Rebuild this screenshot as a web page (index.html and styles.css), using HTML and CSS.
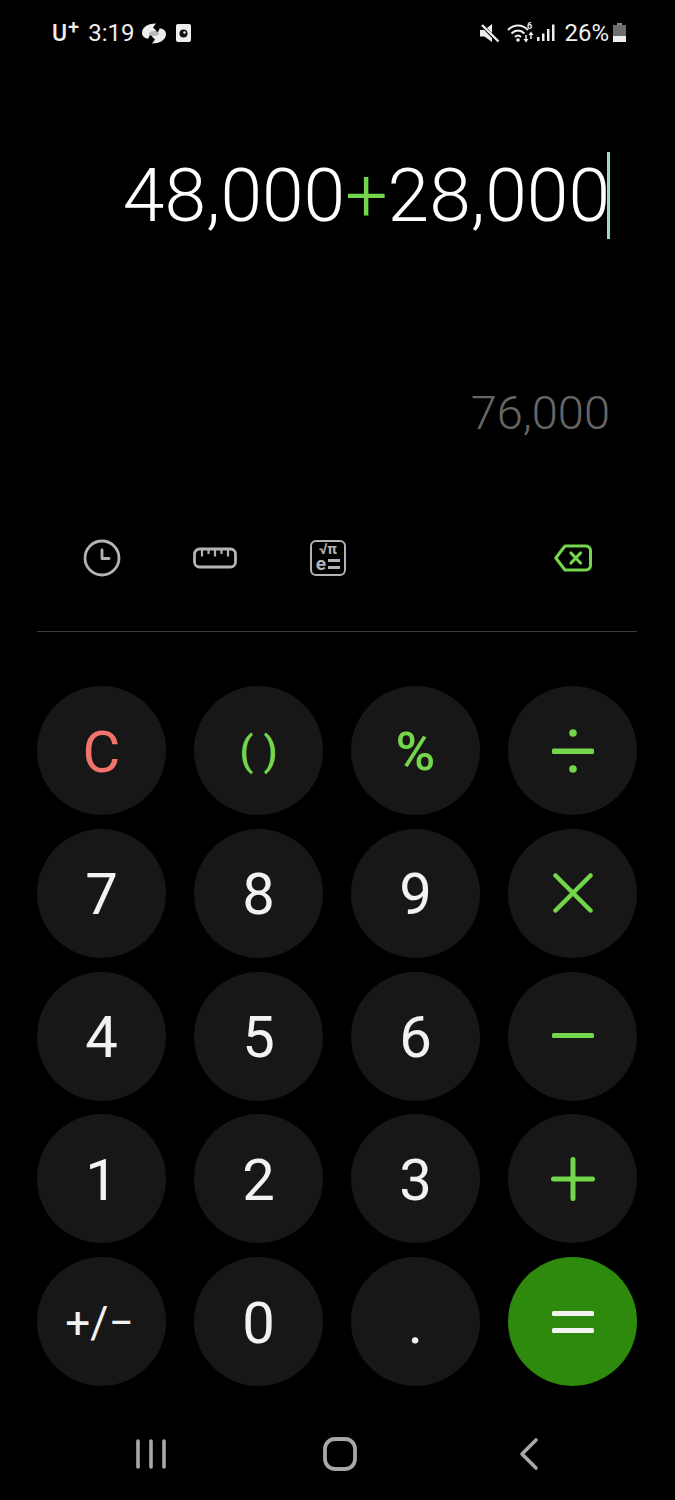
FILE: index.html
```html
<!DOCTYPE html>
<html lang="en">
<head>
<meta charset="utf-8">
<title>Calculator</title>
<link rel="stylesheet" href="styles.css">
</head>
<body>
<div class="phone">
  <header class="status">
    <div class="status-group">
      <span class="carrier">U<sup>+</sup></span>
      <span class="time">3:19</span>
      <svg class="ic-chat" width="24" height="21" viewBox="0 0 24 21" fill="#eee"><path d="M14 .5C7 .5 0 3.500 0 10c0 3.500 3 5.500 6.500 5.500C7.500 11.500 10 8.500 14.500 8L11 4.500z"/><path d="M10 20.500C17 20.500 24 17.500 24 11c0-3.500-3-5.500-6.500-5.500C16.500 9.500 14 12.500 9.500 13L13 16.500z"/><ellipse cx="12" cy="10.500" rx="5" ry="2.500" fill="#bbb"/></svg>
      <svg class="ic-cam" width="15" height="18" viewBox="0 0 15 18"><rect x="0" y="0" width="15" height="18" rx="2" fill="#eee"/><circle cx="7.500" cy="9.500" r="4" fill="#111"/><circle cx="8.500" cy="8.500" r="1.200" fill="#eee"/></svg>
    </div>
    <div class="status-group right">
      <svg class="ic-mute" width="20" height="19" viewBox="0 0 20 19"><path fill="#eee" d="M0 6h4.500L12 0v18L4.500 12.500H0z"/><path d="M1 0l17 18" stroke="#000" stroke-width="3.500"/><path d="M2 1l16.500 16.500" stroke="#eee" stroke-width="2.400"/></svg>
      <svg class="ic-wifi" width="27" height="22" viewBox="0 0 27 22"><g fill="none" stroke="#eee" stroke-width="2"><path d="M1 8c6-6 14-6 20 0"/><path d="M4.500 11.500c4-4 9-4 13 0"/><path d="M8 15c2-2 4-2 6 0"/></g><circle cx="11" cy="18" r="1.800" fill="#eee"/><text class="wifi-six" x="20" y="7">6</text><path stroke="#eee" stroke-width="1.500" d="M19 13v5M24 12v5"/><path fill="#eee" d="M16.500 17h5L19 20.500zM21.500 13h5L24 9.500z"/></svg>
      <svg class="ic-signal" width="18" height="20" viewBox="0 0 18 20"><g fill="#eee"><rect x="0" y="14" width="2.500" height="4"/><rect x="5" y="10.500" width="2.500" height="7.500"/><rect x="10" y="6" width="2.500" height="12"/><rect x="15" y="1.500" width="2.500" height="16.500"/></g></svg>
      <span class="pct">26%</span>
      <svg class="ic-batt" width="13" height="20" viewBox="0 0 13 20"><rect x="4" y="0" width="5" height="2" fill="#888"/><rect x="0" y="2" width="13" height="11" fill="#6e6e6e"/><rect x="0" y="13" width="13" height="6" fill="#eee"/></svg>
    </div>
  </header>

  <section class="display">
    <div class="expression">48,000<span class="op">+</span>28,000<span class="caret"></span></div>
    <div class="preview">76,000</div>
  </section>

  <section class="tools">
    <div class="tools-left">
      <svg class="tool tool-clock" width="38" height="38" viewBox="0 0 38 38" fill="none" stroke="#b3b3b3" stroke-width="2.800"><circle cx="19" cy="19" r="17"/><path d="M19 11V19.500H26" stroke-linecap="round" stroke-linejoin="round"/></svg>
      <svg class="tool tool-ruler" width="44" height="22" viewBox="0 0 44 22" fill="none" stroke="#b3b3b3" stroke-width="2.800"><rect x="1.500" y="2" width="41" height="18" rx="5"/><path d="M9 3v6.500M15.500 3v4M22 3v6.500M28.500 3v4M35 3v6.500" stroke-width="2.200"/></svg>
      <div class="tool tool-sci"><span class="sci-top">√π</span><span class="sci-bottom">e<span class="sci-eq"></span></span></div>
    </div>
    <svg class="tool tool-back" width="38" height="28" viewBox="0 0 38 28" fill="none" stroke="#74d64a" stroke-width="3" stroke-linejoin="round" stroke-linecap="round"><path d="M11 2H32a4.500 4.500 0 0 1 4.500 4.500v15A4.500 4.500 0 0 1 32 26H11L1.800 14z"/><path d="M17 9l9.500 10M26.500 9L17 19" stroke-width="3.200"/></svg>
  </section>

  <hr class="divider">

  <section class="keypad">
    <button class="key clear">C</button>
    <button class="key accent paren">( )</button>
    <button class="key accent pct-key">%</button>
    <button class="key accent sym">
      <svg width="42" height="44" viewBox="0 0 42 44" fill="#74d64a"><rect x="0" y="19.500" width="42" height="5.500" rx="1.500"/><circle cx="21" cy="4" r="3.800"/><circle cx="21" cy="40" r="3.800"/></svg>
    </button>
    <button class="key">7</button>
    <button class="key">8</button>
    <button class="key">9</button>
    <button class="key accent sym">
      <svg width="40" height="40" viewBox="0 0 40 40" stroke="#74d64a" stroke-width="4.500" stroke-linecap="round"><path d="M2.500 2.500l35 35M37.500 2.500l-35 35"/></svg>
    </button>
    <button class="key">4</button>
    <button class="key">5</button>
    <button class="key">6</button>
    <button class="key accent sym">
      <svg width="42" height="6" viewBox="0 0 42 6" fill="#74d64a"><rect x="0" y="0" width="42" height="5" rx="1.500"/></svg>
    </button>
    <button class="key">1</button>
    <button class="key">2</button>
    <button class="key">3</button>
    <button class="key accent sym">
      <svg width="44" height="44" viewBox="0 0 44 44" stroke="#74d64a" stroke-width="5" stroke-linecap="round"><path d="M2.500 22h39M22 2.500v39"/></svg>
    </button>
    <button class="key small">+/−</button>
    <button class="key">0</button>
    <button class="key">.</button>
    <button class="key equals">
      <svg width="42" height="24" viewBox="0 0 42 24" fill="#f2f2f2"><rect x="0" y="1" width="42" height="5" rx="1.500"/><rect x="0" y="18" width="42" height="5" rx="1.500"/></svg>
    </button>
  </section>

  <nav class="navbar">
    <svg width="32" height="32" viewBox="0 0 32 32" stroke="#a8a8a8" stroke-width="3.600" stroke-linecap="round"><path d="M3 3v26M16 3v26M29 3v26"/></svg>
    <svg class="nav-home" width="34" height="34" viewBox="0 0 34 34" fill="none" stroke="#a8a8a8" stroke-width="3.800"><rect x="2" y="2" width="30" height="30" rx="10"/></svg>
    <svg class="nav-back" width="22" height="34" viewBox="0 0 22 34" fill="none" stroke="#a8a8a8" stroke-width="3.600" stroke-linecap="round" stroke-linejoin="round"><path d="M18 3L4 17l14 14"/></svg>
  </nav>
</div>
</body>
</html>
```
FILE: styles.css
```css
* { box-sizing: border-box; }
html, body { margin: 0; padding: 0; background: #000; }
body { font-family: Roboto, "Liberation Sans", sans-serif; color: #f2f2f2; }
.phone { width: 675px; height: 1500px; overflow: hidden; display: flex; flex-direction: column; background: #000; }

.status { height: 66px; padding: 0 49px 0 52px; display: flex; justify-content: space-between; align-items: center; font-size: 24px; color: #eee; }
.status-group { display: flex; align-items: center; gap: 8px; }
.status-group.right { gap: 4px; }
.carrier { font-weight: 500; font-size: 23px; line-height: 1; letter-spacing: 1px; }
.carrier sup { font-size: 20px; line-height: 0; vertical-align: 7px; }
.time { font-size: 24px; }
.ic-chat { margin-right: 2px; }
.ic-mute { margin-right: 3px; }
.ic-wifi { margin-right: -1px; }
.wifi-six { font-size: 9px; font-weight: 700; fill: #eee; }
.pct { margin-left: 5px; font-size: 24px; }

.display { height: 464px; padding: 74px 65px 0 0; display: flex; flex-direction: column; align-items: flex-end; }
.expression { font-size: 75px; font-weight: 300; line-height: 110px; color: #fff; white-space: nowrap; position: relative; }
.op { color: #74d64a; }
.caret { position: absolute; right: 0; top: 12px; width: 3px; height: 87px; background: #9ed8d0; }
.preview { margin-top: 133px; font-size: 47px; font-weight: 300; line-height: 60px; color: #666; }

.tools { height: 71px; margin-top: -8px; padding: 0 83px 0 83px; display: flex; justify-content: space-between; align-items: center; }
.tools-left { display: flex; align-items: center; gap: 72px; }
.tool { display: block; }
.tool-sci { width: 36px; height: 36px; margin-left: 1px; padding-top: 1px; border: 2.800px solid #b3b3b3; border-radius: 6px; display: flex; flex-direction: column; align-items: center; font-weight: 700; color: #b3b3b3; }
.sci-top { font-size: 15px; line-height: 13px; height: 13px; }
.sci-bottom { font-size: 19px; line-height: 16px; height: 16px; display: flex; align-items: center; gap: 2px; }
.sci-eq { display: block; width: 12px; height: 10px; border-top: 3px solid #b3b3b3; border-bottom: 3px solid #b3b3b3; }

.divider { height: 1px; margin: 38px 38px 0 37px; border: 0; background: #3a3a3a; }

.keypad { margin: 54px 38px 0 37px; display: grid; grid-template-columns: repeat(4, 129px); grid-auto-rows: 129px; column-gap: 28px; row-gap: 13.750px; }
.key { width: 129px; height: 129px; padding: 2px 0 0; border: 0; border-radius: 50%; background: #171717; color: #f2f2f2; font-family: inherit; font-size: 58px; font-weight: 400; display: flex; align-items: center; justify-content: center; }
.clear { color: #f2736b; }
.accent { color: #74d64a; }
.paren { font-size: 40px; font-weight: 500; }
.pct-key { font-size: 54px; font-weight: 500; }
.small { font-size: 44px; padding-right: 4px; }
.equals { background: #2d8a0d; }
.sym, .equals { padding: 0; }

.navbar { flex: 1; padding: 22px 0 0 135px; display: flex; align-items: center; }
.nav-home { margin-left: 156px; }
.nav-back { margin-left: 161px; }
```
